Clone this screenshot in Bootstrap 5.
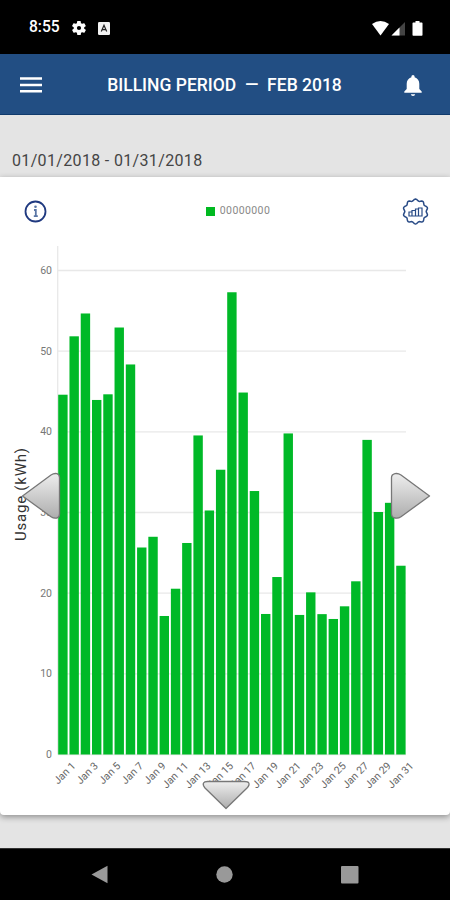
<!DOCTYPE html>
<html lang="en">
<head>
<meta charset="utf-8">
<meta name="viewport" content="width=device-width, initial-scale=1">
<title>Billing period</title>
<link href="https://cdn.jsdelivr.net/npm/bootstrap@5.3.0/dist/css/bootstrap.min.css" rel="stylesheet">
<style>
body{font-family:Roboto,"Liberation Sans",sans-serif;background:#e4e4e4;width:450px;height:900px;overflow:hidden}
svg{display:block;flex:none}
.statusbar{height:54px;background:#000;color:#fff;padding:2px 26px 0 29px}
.clock{font-size:15.6px;font-weight:500;width:43px;line-height:1}
.appbar{height:61px;background:#224e83;border-bottom:1.5px solid #103a6c;padding:2px 28px 0 20px;color:#fff}
.apptitle{font-size:17.5px;font-weight:500;line-height:1;white-space:pre;padding:2px 0 0 3px}
.period{height:62px;padding:37px 12px 0;font-size:16px;line-height:18px;color:#444;letter-spacing:.34px}
.panel{height:638px;border-radius:0 0 4px 4px;box-shadow:0 2px 6px rgba(0,0,0,.38)}
.tools{height:68px;padding:0 21px 0 24px}
.legend-box{padding-left:27px;gap:5px}
.legend-key{width:9px;height:9px;background:#00b920}
.legend-text{font-size:10.5px;line-height:1;color:#888;letter-spacing:.4px;padding-top:1px}
.sysbar{height:52px;background:#000;border-top:1px solid #333;padding:0 91px}
.ticks{font-size:10.5px;fill:#777}
.days{font-size:10.5px;fill:#666}
.axis-title{font-size:15px;fill:#333}
</style>
<script src="https://cdn.jsdelivr.net/npm/bootstrap@5.3.0/dist/js/bootstrap.bundle.min.js"></script>
</head>
<body class="d-flex flex-column">
<div class="statusbar d-flex align-items-center">
  <span class="clock">8:55</span>
  <svg width="14" height="16" viewBox="2 2 20 20" class="me-2 ms-0"><path fill="#fff" fill-rule="evenodd" d="M19.4 13a7.500 7.500 0 0 0 0-2l2.100-1.600a.5.500 0 0 0 .1-.6l-2-3.500a.5.500 0 0 0-.6-.2l-2.500 1a7.300 7.300 0 0 0-1.700-1l-.4-2.600a.5.500 0 0 0-.5-.5h-4a.5.500 0 0 0-.5.400L9 5.100c-.6.200-1.200.6-1.700 1l-2.500-1a.5.500 0 0 0-.6.200l-2 3.500c-.1.200-.1.500.1.600L4.500 11a8 8 0 0 0 0 2l-2.100 1.600a.5.500 0 0 0-.1.600l2 3.500c.1.200.4.300.6.200l2.500-1c.5.400 1.100.7 1.700 1l.4 2.600c0 .2.200.4.500.4h4c.2 0 .5-.2.500-.4l.4-2.600c.6-.3 1.200-.6 1.700-1l2.500 1c.2.100.5 0 .6-.2l2-3.500a.5.500 0 0 0-.1-.6zM12 15a3 3 0 1 1 0-6 3 3 0 0 1 0 6z"/></svg>
  <svg width="12" height="13" viewBox="0 0 12 13" class="ms-1"><rect width="12" height="13" rx="1.200" fill="#f2f2f2"/><path d="M3.300 9.500 6 3.200l2.700 6.300M4.400 7.700h3.200" fill="none" stroke="#222" stroke-width="1.200"/></svg>
  <svg width="52" height="17" viewBox="0 0 52 17" class="ms-auto"><path d="M0 4Q8.500-2 17 4L8.500 15.500z" fill="#fff"/><path d="M19.500 15.500 33 2v13.500z" fill="#444"/><path d="M19.500 15.500 27.500 7.500v8z" fill="#fff"/><path d="M43.500 1h4v1.500h2.200q.8 0 .8.800v11.700q0 .8-.8.800h-8.400q-.8 0-.8-.8V3.300q0-.8.800-.8h2.200z" fill="#fff"/></svg>
</div>
<nav class="appbar d-flex align-items-center justify-content-between">
  <svg width="22" height="16" viewBox="0 0 22 16"><path d="M0 1.500h22M0 8h22M0 14.300h22" stroke="#fff" stroke-width="2.400"/></svg>
  <span class="apptitle">BILLING PERIOD  —  FEB 2018</span>
  <svg width="18" height="21" viewBox="0 0 18 21"><path fill="#fff" d="M9 21a2.200 2.200 0 0 0 2.200-1.800H6.800A2.200 2.200 0 0 0 9 21zM15.300 14V8.800c0-3.200-1.700-5.800-4.700-6.600v-.6a1.600 1.600 0 0 0-3.200 0v.6C4.400 3 2.700 5.600 2.700 8.800V14L.3 16.500v1.200h17.400v-1.200z"/></svg>
</nav>
<div class="period">01/01/2018 - 01/31/2018</div>
<main class="panel bg-white">
  <div class="tools d-flex align-items-center justify-content-between">
    <svg width="23" height="23" viewBox="0 0 23 23"><circle cx="11.500" cy="11.500" r="10" fill="none" stroke="#203a80" stroke-width="1.800"/><path d="M10 10h1.800v6M9.800 16.200h4" fill="none" stroke="#5a76a5" stroke-width="1.800"/><circle cx="11.500" cy="6.700" r="1.300" fill="#5a76a5"/></svg>
    <div class="legend-box d-flex align-items-center"><span class="legend-key"></span><span class="legend-text">00000000</span></div>
    <svg width="27" height="27" viewBox="-13.500 -13.500 27 27" fill="none" stroke="#294b86"><path id="gear" stroke-width="1.500" stroke-linejoin="round"/><path d="M-6.500 4.500V.5h3v4zM-3.500 4.500v-5.500h3.500V4.500zM0 4.500v-7h3V4.500zM3 4.500v-8h3.500v8zM-7 4.500H7" stroke-width="1.200"/></svg>
  </div>
  <svg id="chart" width="450" height="570" viewBox="0 245 450 570">
    <defs><linearGradient id="metal" x2="0" y2="1"><stop stop-color="#eee"/><stop offset="1" stop-color="#adadad"/></linearGradient></defs>
    <g id="grid" stroke="#e8e8e8" stroke-width="1.300"></g>
    <g id="bars" fill="#00b927"></g>
    <g id="ticks" class="ticks" text-anchor="end"></g>
    <g id="days" class="days" text-anchor="end"></g>
    <text class="axis-title" transform="translate(26 541) rotate(-90)" textLength="93">Usage (kWh)</text>
    <g fill="url(#metal)" stroke="#777" stroke-width="1.300" stroke-linejoin="round">
      <path d="M22.500 496 51 475q3-2 6-1.300 2.500.8 2.500 4v36q0 3.500-2.500 4.300-3 .8-6-1.300z"/>
      <path d="M429.500 496 401 475q-3-2-6-1.300-3.500.8-3.500 4v36q0 3.500 3.500 4.300 3 .8 6-1.300z"/>
      <path d="M226 808.500 205 788q-2.500-3-1.500-5 .8-1.500 4-1.500h37q3.500 0 4.300 1.500 1 2-1.800 5z"/>
    </g>
  </svg>
</main>
<footer class="sysbar d-flex align-items-center justify-content-between mt-auto">
  <svg width="17" height="19" viewBox="0 0 17 19"><path d="M.5 9.500 16.500.8v17.400z" fill="#999"/></svg>
  <svg width="17" height="17" viewBox="0 0 17 17"><circle cx="8.500" cy="8.500" r="8.200" fill="#999"/></svg>
  <svg width="18" height="18" viewBox="0 0 18 18"><rect width="17.500" height="17.500" rx="1" fill="#999"/></svg>
</footer>
<script>
const usage=[44.6,51.84,54.67,43.95,44.65,52.93,48.35,25.66,26.99,17.17,20.55,26.22,39.55,30.25,35.3,57.3,44.87,32.66,17.42,22,39.8,17.3,20.1,17.4,16.8,18.37,21.47,39,30.06,31.2,23.4];
const base=754.5,unit=8.067,step=11.267;
const fill=(id,html)=>document.getElementById(id).innerHTML=html;
let grid='<path d="M57.7 246V754.500"/>',ticks='';
for(let v=0;v<=60;v+=10){
  const y=base-v*unit;
  grid+=`<path d="M58 ${y}H406"/>`;
  ticks+=`<text x="52" y="${y+3.5}">${v}</text>`;
}
fill('grid',grid);fill('ticks',ticks);
fill('bars',usage.map((v,i)=>`<rect x="${58.2+i*step}" y="${base-v*unit}" width="9.4" height="${v*unit}"/>`).join(''));
fill('days',usage.map((v,i)=>i%2?'':`<text transform="translate(${76.2+i*step} 766.5) rotate(-45)">Jan ${i+1}</text>`).join(''));
let d='';
for(let a=0;a<=360;a+=5){
  const r=11.6+Math.cos(a*Math.PI/180*10)*.9,t=(a-90)*Math.PI/180;
  d+=(a?'L':'M')+(r*Math.cos(t)).toFixed(2)+' '+(r*Math.sin(t)).toFixed(2);
}
document.getElementById('gear').setAttribute('d',d+'z');
</script>
</body>
</html>
